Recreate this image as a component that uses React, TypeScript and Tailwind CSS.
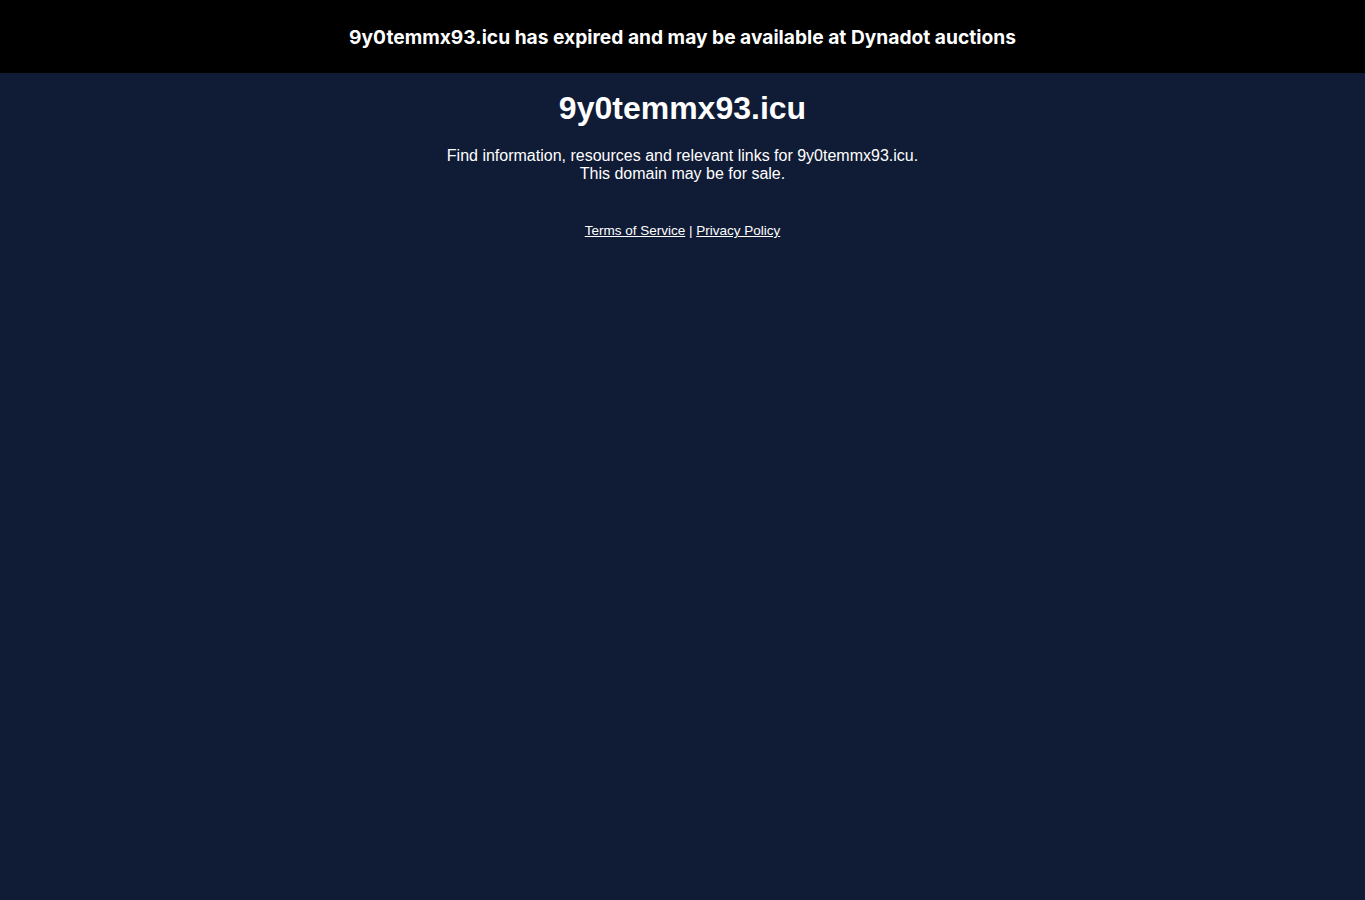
export default function App() {
  return (
    <div className="min-h-[900px] bg-[#101b36] text-white">
      <div className="h-[73px] bg-black flex items-center justify-center pt-[1px]">
        <p className="text-[19.2px] font-bold" style={{ fontFamily: 'Inter, "Noto Sans", sans-serif' }}>
          9y0temmx93.icu has expired and may be available at Dynadot auctions
        </p>
      </div>
      <div className="flex flex-col items-center text-center" style={{ fontFamily: '"Liberation Sans", Arial, sans-serif' }}>
        <h1 className="mt-[15px] text-[32px] font-bold leading-[40px]">9y0temmx93.icu</h1>
        <p className="mt-[19px] text-[16px] leading-[18px]">
          Find information, resources and relevant links for 9y0temmx93.icu.
          <br />
          This domain may be for sale.
        </p>
        <p className="mt-[40px] text-[13.5px] leading-[16px]">
          <a href="#" className="underline">Terms of Service</a> | <a href="#" className="underline">Privacy Policy</a>
        </p>
      </div>
    </div>
  );
}
